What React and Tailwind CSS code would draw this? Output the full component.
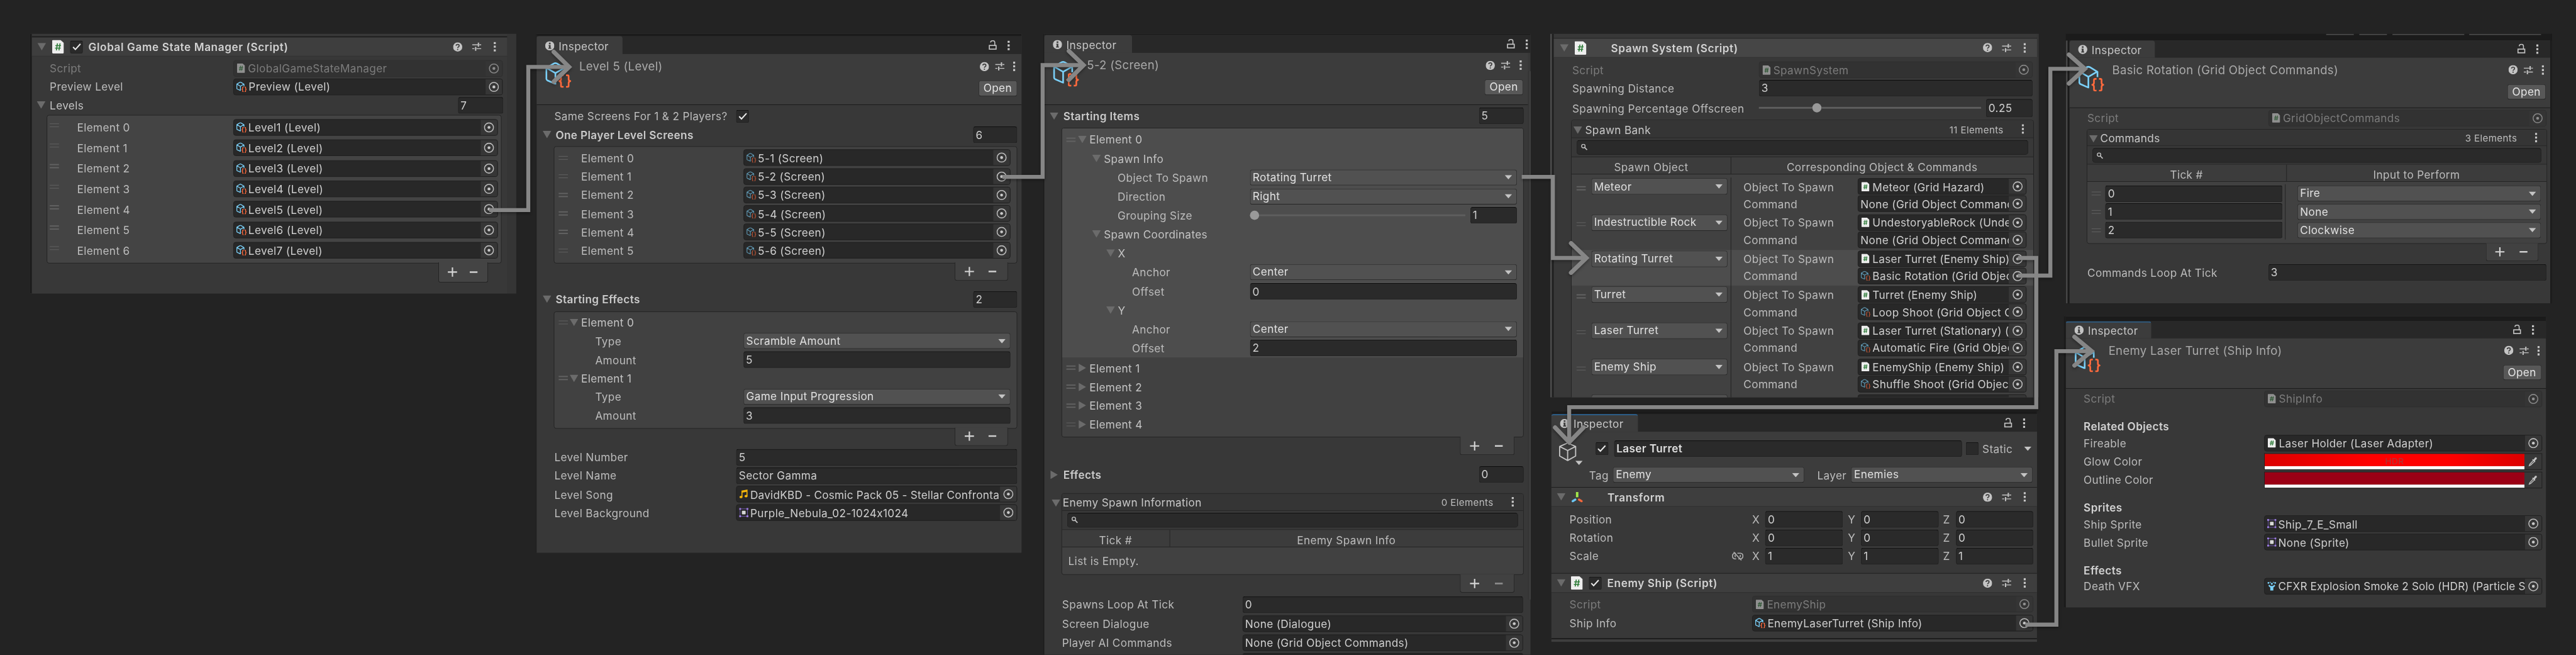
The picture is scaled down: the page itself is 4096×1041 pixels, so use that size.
import React from "react";

const cx = (...c) => c.filter(Boolean).join(" ");

/* ---------- icons ---------- */

const ScriptIcon = ({ className = "h-[16px] w-[13px]" }) => (
  <svg viewBox="0 0 19 22" className={cx("shrink-0", className)}>
    <path d="M1.5 0H13.5L19 5V20.500Q19 22 17.500 22H1.500Q0 22 0 20.500V1.500Q0 0 1.500 0Z" fill="#eeeeee" />
    <path d="M8.600 5.500L6.800 17M12.800 5.500L11 17M5.200 9.300H14.400M4.600 13.400H13.800" stroke="#2f7d3a" strokeWidth="1.700" fill="none" />
  </svg>
);

const AssetIcon = ({ className = "size-[16px]", sw = 2.7 }) => (
  <svg viewBox="0 0 43 42" className={cx("shrink-0", className)} fill="none" strokeLinejoin="round">
    <path
      d="M31.500 18.500V9.800L19 2.300Q16.600 1.200 14.300 2.300L2 9.500V27.500Q2.200 29 3.500 29.800L16 35.300H18M2 9.500L16.700 18L31.500 9.500M16.700 18V35"
      stroke="#7bd0f8"
      strokeWidth={sw}
    />
    <path
      d="M30 21.500H27.800Q25.800 21.500 25.800 23.500V28Q25.800 30.300 23 31Q25.800 31.700 25.800 34V38.500Q25.800 40.500 27.800 40.500H30M34 21.500H36.200Q38.200 21.500 38.200 23.500V28Q38.200 30.300 41 31Q38.200 31.700 38.200 34V38.500Q38.200 40.500 36.200 40.500H34"
      stroke="#ff6a3d"
      strokeWidth={sw}
    />
  </svg>
);

const SmallAsset = () => <AssetIcon className="size-[17px]" sw={3.4} />;
const DimAsset = () => <AssetIcon className="size-[16px] opacity-65" sw={3.2} />;
const DimScript = () => <ScriptIcon className="mr-[2px] ml-[1px] h-[16px] w-[13px] opacity-50" />;
const FieldScript = () => <ScriptIcon className="mr-[2px] ml-[1px] h-[16px] w-[13px]" />;

const SpriteIcon = () => (
  <svg viewBox="0 0 15 15" className="size-[15px] shrink-0">
    <rect x="1.500" y="1.500" width="12" height="12" fill="none" stroke="#6d55a5" strokeWidth="1" />
    <path d="M0 0h3v3h-3zM12 0h3v3h-3zM0 12h3v3h-3zM12 12h3v3h-3z" fill="#9a7be0" />
    <rect x="4.500" y="4.500" width="6" height="6" rx="1" fill="#d8d8d8" />
  </svg>
);

const MusicIcon = () => (
  <svg viewBox="0 0 15 15" className="size-[15px] shrink-0">
    <path d="M4.600 12V2.500L12.800 1V10.500" fill="none" stroke="#f5b50a" strokeWidth="1.600" />
    <path d="M4.600 2.300L12.800 .8V3.600L4.600 5.100Z" fill="#f5b50a" />
    <ellipse cx="3" cy="12.200" rx="2.500" ry="2" fill="#f5b50a" />
    <ellipse cx="11.200" cy="10.800" rx="2.500" ry="2" fill="#f5b50a" />
  </svg>
);

const ParticleIcon = () => (
  <svg viewBox="0 0 15 15" className="size-[15px] shrink-0" fill="#7bd0f8">
    <path d="M5 14.500V9.500L2.500 7.500Q1.500 5.500 3.500 5L5.500 7H9.500L11.500 5Q13.500 5.500 12.500 7.500L10 9.500V14.500Z" />
    <circle cx="2" cy="2" r="1.400" />
    <circle cx="7.500" cy="3.500" r="1.700" />
    <circle cx="13" cy="2" r="1.400" />
    <circle cx="5" cy="1" r=".9" />
    <circle cx="10.300" cy="1" r=".9" />
  </svg>
);

const Tri = ({ right, className }) =>
  right ? (
    <svg viewBox="0 0 12 14" className={cx("h-[14px] w-[12px] shrink-0", className)}>
      <path d="M0 0L12 7L0 14Z" fill="#6b6b6b" />
    </svg>
  ) : (
    <svg viewBox="0 0 14 12" className={cx("h-[12px] w-[14px] shrink-0", className)}>
      <path d="M0 0H14L7 12Z" fill="#6b6b6b" />
    </svg>
  );

const Caret = ({ className }) => (
  <svg viewBox="0 0 12 7" className={cx("h-[7px] w-[12px] shrink-0", className)}>
    <path d="M0 0H12L6 7Z" fill="#c4c4c4" />
  </svg>
);

const Dots = () => (
  <svg viewBox="0 0 4 16" className="h-[16px] w-[4px] shrink-0" fill="#c4c4c4">
    <path d="M.3 .3h3.400v3.400h-3.400zM.3 6.300h3.400v3.400h-3.400zM.3 12.300h3.400v3.400h-3.400z" />
  </svg>
);

const HelpIcon = () => (
  <svg viewBox="0 0 16 16" className="size-[15px] shrink-0">
    <circle cx="8" cy="8" r="8" fill="#c4c4c4" />
    <path d="M5.300 5.900Q5.500 3.600 8 3.600Q10.600 3.600 10.600 5.800Q10.600 7 9.400 7.800Q8 8.600 8 9.900" stroke="#3c3c3c" strokeWidth="1.800" fill="none" />
    <circle cx="8" cy="12.400" r="1.150" fill="#3c3c3c" />
  </svg>
);

const SlidersIcon = () => (
  <svg viewBox="0 0 16 16" className="h-[16px] w-[15px] shrink-0" stroke="#c4c4c4" fill="none">
    <path d="M0 4.800H11M12.500 4.800H16M0 11.500H4M7.500 11.500H16" strokeWidth="1.500" />
    <path d="M11 1V8M6.200 8.300V15.300" strokeWidth="2.200" />
  </svg>
);

const LockIcon = () => (
  <svg viewBox="0 0 14 17" className="h-[17px] w-[14px] shrink-0" stroke="#c4c4c4" fill="none">
    <rect x="1.500" y="9" width="11" height="6" strokeWidth="1.700" />
    <path d="M3.600 4.200V3.800Q3.800 1.300 6.800 1.300H7.600Q10.400 1.500 10.400 4.200V9" strokeWidth="1.600" />
  </svg>
);

const InfoIcon = () => (
  <svg viewBox="0 0 16 16" className="size-[15px] shrink-0">
    <circle cx="8" cy="8" r="8" fill="#c4c4c4" />
    <path d="M6.500 2.500h3v2.800h-3zM6 6.600h3.500v4.900h1v1.800h-5v-1.800h1v-3.200h-.5z" fill="#3c3c3c" />
  </svg>
);

const SearchIcon = () => (
  <svg viewBox="0 0 12 12" className="size-[11px] shrink-0" stroke="#c4c4c4" fill="none">
    <ellipse cx="4.500" cy="4.200" rx="3.100" ry="3.100" strokeWidth="1.500" />
    <path d="M6.800 6.600L11 11" strokeWidth="1.900" />
  </svg>
);

const Dropper = () => (
  <svg viewBox="0 0 16 17" className="h-[17px] w-[15px] shrink-0">
    <path d="M8.500 7L3 13L2 15.500L4.500 14.500L10.500 9" fill="none" stroke="#c4c4c4" strokeWidth="1.400" />
    <path d="M7 5.500L8.300 4.200L9.500 5L12 1.500Q14 .5 15 2Q15.500 3.200 14.500 4.300L11.800 7L12.700 8.500L11.400 9.800Z" fill="#c4c4c4" />
  </svg>
);

const CubeIcon = () => (
  <svg viewBox="0 0 31 31" className="size-[31px] shrink-0" fill="none" stroke="#c4c4c4" strokeWidth="1.900" strokeLinejoin="round">
    <path d="M15.500 1.200L28.500 7V22.500L15.500 29.800L2.500 22.500V7ZM2.500 7L15.500 13.500L28.500 7M15.500 13.500V29.500" />
  </svg>
);

const TransformIcon = () => (
  <svg viewBox="0 0 20 17" className="h-[17px] w-[20px] shrink-0" strokeLinecap="round" strokeWidth="3.600">
    <path d="M10 0V8.500" stroke="#a2e84a" strokeLinecap="butt" strokeWidth="4" />
    <path d="M7 12.500L2.800 15" stroke="#6cc7f5" />
    <path d="M13 12.500L17.200 15" stroke="#f2673c" />
  </svg>
);

const LinkIcon = () => (
  <svg viewBox="0 0 19 15" className="h-[15px] w-[19px] shrink-0" fill="none" stroke="#b0b0b0" strokeWidth="1.600">
    <path d="M6.500 2.800H4.800Q1 3.200 1 7.300Q1 11.500 5 11.900H7M12 2.800H14Q18 3.200 18 7.300Q18 11.500 14 11.900H10.500M5.500 5.500Q4.500 7.500 6 9M13.500 5.500Q14.500 7.500 13 9M9 2.800H12" />
    <path d="M3 .8L15.500 14.300" />
  </svg>
);

const Target = ({ dim }) => (
  <svg viewBox="0 0 16 16" className={cx("size-[17px] shrink-0", dim && "opacity-60")}>
    <circle cx="8" cy="8" r="6.900" fill="none" stroke="#bdbdbd" strokeWidth="1.500" />
    <circle cx="8" cy="8" r="2.200" fill="#c9c9c9" />
  </svg>
);

/* ---------- controls ---------- */

const Row = ({ className, children }) => <div className={cx("flex shrink-0 items-center", className)}>{children}</div>;

const Label = ({ className, children, dim }) => (
  <div className={cx("shrink-0 whitespace-nowrap", dim ? "text-[#7c7c7c]" : "text-[#bcbcbc]", className)}>
    <span className="relative top-[1px]">{children}</span>
  </div>
);

const Fold = ({ className, gap = "gap-[6px]", right, bold, children }) => (
  <div className={cx("flex shrink-0 items-center whitespace-nowrap text-[#c4c4c4]", gap, className)}>
    <Tri right={right} />
    <span className={cx("pt-[2px]", bold && "font-semibold text-[#cacaca]")}>{children}</span>
  </div>
);

const Input = ({ className, h = "h-[27px]", children, bold }) => (
  <div
    className={cx(
      "flex shrink-0 items-center overflow-hidden rounded-[4px] border-[1.500px] border-[#212121] border-t-[#0d0d0d] bg-[#2a2a2a] pl-[3.500px] pt-[1px] whitespace-nowrap text-[#cfcfcf]",
      h,
      bold && "font-semibold",
      className
    )}
  >
    {children}
  </div>
);

const Obj = ({ className, icon, children, dim, bw = "w-[27px]" }) => (
  <div
    className={cx(
      "flex h-[27px] shrink-0 items-stretch overflow-hidden rounded-[4px] border-[1.500px]",
      dim ? "border-[#2f2f2f] bg-[#323232] text-[#7c7c7c]" : "border-[#202020] bg-[#282828] text-[#cfcfcf]",
      className
    )}
  >
    <div className={cx("flex min-w-0 flex-1 items-center gap-[3px] overflow-hidden whitespace-nowrap", icon ? "pl-[4px]" : "pl-[3.500px]")}>
      {icon}
      <span className="pt-[2px]">{children}</span>
    </div>
    <div className={cx("flex shrink-0 items-center justify-center", bw, dim ? "bg-[#353535]" : "bg-[#363636]")}>
      <Target dim={dim} />
    </div>
  </div>
);

const Select = ({ className, children }) => (
  <div
    className={cx(
      "flex h-[26px] shrink-0 items-center justify-between rounded-[4px] border-[1.500px] border-[#303030] border-b-[#262626] bg-[#515151] pr-[7px] pl-[4px] whitespace-nowrap text-[#e0e0e0]",
      className
    )}
  >
    <span>{children}</span>
    <Caret />
  </div>
);

const Check = ({ on, className }) => (
  <div className={cx("flex size-[21px] shrink-0 items-center justify-center rounded-[3px] border-[1.500px] border-[#212121] border-t-[#0d0d0d] bg-[#2a2a2a]", className)}>
    {on && (
      <svg viewBox="0 0 14 13" className="h-[13px] w-[14px]" fill="none" stroke="#e8e8e8" strokeWidth="2.100">
        <path d="M1 6.500L4.800 10.500L13 1.500" />
      </svg>
    )}
  </div>
);

const Handle = ({ className }) => (
  <div className={cx("flex w-[15px] shrink-0 flex-col gap-[3.500px]", className)}>
    <div className="h-[1.500px] bg-[#626262]" />
    <div className="h-[1.500px] bg-[#626262]" />
  </div>
);

const ListBox = ({ className, bg = "bg-[#414141]", children }) => (
  <div className={cx("shrink-0 overflow-hidden rounded-[4px] border-[1.500px] border-[#242424]", bg, className)}>{children}</div>
);

const Footer = ({ className, minusDim, bg = "bg-[#414141]" }) => (
  <div className={cx("relative -mt-[1.500px] flex shrink-0 items-center rounded-b-[4px] border-[1.500px] border-t-0 border-[#242424]", bg, className)}>
    <svg viewBox="0 0 16 16" className="size-[16px] shrink-0" stroke="#d6d6d6" strokeWidth="2.200">
      <path d="M8 .5V15.500M.5 8H15.500" />
    </svg>
    <svg viewBox="0 0 13 4" className={cx("ml-auto h-[4px] w-[13px] shrink-0", minusDim && "opacity-50")}>
      <path d="M0 .7h13v2.600h-13z" fill="#d0d0d0" />
    </svg>
  </div>
);

const Tools = ({ wide, className }) => (
  <div className={cx("ml-auto flex shrink-0 items-center", className)}>
    <HelpIcon />
    <div className={wide ? "w-[15.500px]" : "w-[10px]"} />
    <SlidersIcon />
    <div className={wide ? "w-[20.500px]" : "w-[14.500px]"} />
    <Dots />
  </div>
);

const TabBar = ({ className, tab, pr = "pr-[19px]", blue }) => (
  <div className={cx("flex shrink-0 items-stretch bg-[#282828]", className)}>
    <div
      className={cx(
        "flex items-center gap-[7px] rounded-t-[4px] bg-[#3c3c3c] pl-[14px] text-[#c8c8c8]",
        tab,
        blue ? "border-t-[2.500px] border-[#2c5d87]" : "pt-[2px]"
      )}
    >
      <InfoIcon />
      <span className="pt-[2px]">Inspector</span>
    </div>
    <div className={cx("ml-auto flex items-center gap-[17px]", pr)}>
      <LockIcon />
      <Dots />
    </div>
  </div>
);

const AssetHeader = ({ className, title }) => (
  <div className={cx("flex shrink-0 border-b-[1.500px] border-[#1a1a1a] bg-[#3c3c3c] pl-[14px]", className)}>
    <AssetIcon className="mt-[13px] h-[42px] w-[43px]" />
    <div className="mt-[8px] ml-[12.500px] h-[26px] text-[19px] leading-[26px] tracking-[0.320px] whitespace-nowrap text-[#a9a9a9]">{title}</div>
    <div className="ml-auto flex flex-col items-end pt-[12px]">
      <Tools className="h-[16px] pr-[10px]" />
      <div className="mt-[15px] mr-[7.500px] flex h-[25.500px] w-[63px] items-center justify-center rounded-[4px] border-[1.500px] border-[#303030] border-b-[#242424] bg-[#585858] text-[#e4e4e4]">
        Open
      </div>
    </div>
  </div>
);

const CompHeader = ({ className, icon, check, title, tl }) => (
  <div className={cx("flex shrink-0 items-center border-b border-[#303030] pr-[18px]", className)}>
    <Tri />
    {icon}
    {check}
    <span className={cx("pt-[2px] font-semibold tracking-[0.600px] whitespace-nowrap text-[#d2d2d2]", tl)}>{title}</span>
    <Tools wide />
  </div>
);

const TableHead = ({ className, title, count, tri, hidden }) => (
  <div className={cx("flex shrink-0 items-center border-b-[1.500px] border-[#242424] bg-[#353535] pr-[15px]", className)}>
    {!hidden && <Tri className={cx("mt-[3px]", tri)} />}
    <span className="pt-[3px] text-[#c8c8c8]">{title}</span>
    <span className="mt-[3px] mr-[29px] ml-auto text-[15.500px] text-[#bdbdbd]">{count}</span>
    <Dots />
  </div>
);

const Search = ({ className }) => (
  <div className={cx("shrink-0 border-b-[1.500px] border-[#242424] bg-[#383838] px-[8px] pt-[3px]", className)}>
    <div className="flex h-[24px] items-center rounded-[5px] border-[1.500px] border-[#212121] border-t-[#0d0d0d] bg-[#2a2a2a] pl-[6px]">
      <SearchIcon />
    </div>
  </div>
);

const ColHead = ({ className, l, lw, r }) => (
  <div className={cx("flex shrink-0 border-b-[1.500px] border-[#242424] bg-[#3c3c3c] text-[#bcbcbc]", className)}>
    <div className={cx("flex shrink-0 items-center justify-center border-r-[1.500px] border-[#242424] pt-[7px]", lw)}>{l}</div>
    <div className="flex flex-1 items-center justify-center pt-[7px]">{r}</div>
  </div>
);

/* ---------- panels ---------- */

function GameStateManager() {
  return (
    <section className="mt-[55px] ml-[49px] flex h-[423px] w-[792px] shrink-0 overflow-hidden bg-[#353535]">
      <div className="w-[3px] shrink-0 bg-[#1b1b1b]" />
      <div className="flex w-[774px] shrink-0 flex-col bg-[#383838]">
        <div className="h-[6px] shrink-0 border-b-[2px] border-[#1c1c1c] bg-[#383838]" />
        <CompHeader
          className="h-[31px] bg-[#3e3e3e] pl-[9px]"
          icon={<ScriptIcon className="ml-[10px] h-[22px] w-[19px]" />}
          check={<Check on className="ml-[10px]" />}
          title="Global Game State Manager (Script)"
          tl="ml-[9px]"
        />
        <Row className="mt-[4px] h-[30px] pl-[29px]">
          <Label dim className="w-[299px]">Script</Label>
          <Obj dim className="w-[439px]" icon={<DimScript />}>GlobalGameStateManager</Obj>
        </Row>
        <Row className="h-[30.300px] pl-[29px]">
          <Label className="w-[299px]">Preview Level</Label>
          <Obj className="w-[439px]" icon={<SmallAsset />}>Preview (Level)</Obj>
        </Row>
        <Row className="h-[30.300px] pl-[8px]">
          <Fold gap="gap-[7px]" className="w-[685.500px]">Levels</Fold>
          <Input className="w-[74px]">7</Input>
        </Row>
        <ListBox bg="bg-[#444444]" className="ml-[24px] h-[242px] w-[741px] pt-[3px]">
          {[0, 1, 2, 3, 4, 5, 6].map((i) => (
            <Row key={i} className="h-[33.400px] pl-[4px]">
              <Handle className="-mt-[7px]" />
              <Label className="ml-[29.500px] w-[254px]">Element {i}</Label>
              <Obj className="w-[431px]" icon={<SmallAsset />}>Level{i + 1} (Level)</Obj>
            </Row>
          ))}
        </ListBox>
        <Footer bg="bg-[#444444]" className="ml-[662px] h-[33px] w-[81px] pr-[16px] pl-[14px]" />
      </div>
    </section>
  );
}

function LevelInspector() {
  return (
    <section className="mt-[55px] ml-[32px] flex h-[845px] w-[791px] shrink-0 flex-col overflow-hidden border-l-[1.600px] border-[#1b1b1b] bg-[#383838]">
      <div className="h-[4px] shrink-0 bg-[#1b1b1b]" />
      <TabBar className="h-[29px]" tab="w-[140px]" />
      <AssetHeader className="h-[83px]" title="Level 5 (Level)" />
      <Row className="mt-[3px] h-[30.200px] pl-[29px]">
        <Label className="w-[296px]">Same Screens For 1 &amp; 2 Players?</Label>
        <Check on />
      </Row>
      <Row className="h-[30.200px] pl-[9.500px]">
        <Fold bold gap="gap-[7.500px]" className="w-[701.500px]">One Player Level Screens</Fold>
        <Input className="w-[72px]">6</Input>
      </Row>
      <ListBox className="mt-[4px] ml-[27.500px] h-[190.500px] w-[755.500px] pt-[2.500px]">
        {[0, 1, 2, 3, 4, 5].map((i) => (
          <Row key={i} className="h-[30.200px] pl-[7.500px]">
            <Handle />
            <Label className="ml-[21.500px] w-[264px]">Element {i}</Label>
            <Obj className="w-[435.500px]" icon={<DimAsset />}>5-{i + 1} (Screen)</Obj>
          </Row>
        ))}
      </ListBox>
      <Footer className="ml-[681px] h-[29.500px] w-[87px] pr-[18px] pl-[15px]" />
      <Row className="mt-[15.500px] h-[30.200px] pl-[9.500px]">
        <Fold bold gap="gap-[7.500px]" className="w-[701.500px]">Starting Effects</Fold>
        <Input className="w-[72px]">2</Input>
      </Row>
      <ListBox className="mt-[4px] ml-[27.500px] h-[191px] w-[755.500px] pt-[2.500px]">
        {[
          ["Scramble Amount", 5],
          ["Game Input Progression", 3],
        ].map(([t, a], i) => (
          <div key={i}>
            <Row className="h-[30.200px] pl-[7.500px]">
              <Handle />
              <Fold className="ml-[2.500px]" gap="gap-[5px]">Element {i}</Fold>
            </Row>
            <Row className="h-[30.200px] pl-[67px]">
              <Label className="w-[241px]">Type</Label>
              <Select className="w-[435.500px]">{t}</Select>
            </Row>
            <Row className="h-[30.200px] pl-[67px]">
              <Label className="w-[241px]">Amount</Label>
              <Input className="w-[435.500px]">{a}</Input>
            </Row>
          </div>
        ))}
      </ListBox>
      <Footer className="ml-[681px] h-[29.500px] w-[87px] pr-[18px] pl-[15px]" />
      <Row className="mt-[3.500px] h-[30.200px] pl-[29px]">
        <Label className="w-[296px]">Level Number</Label>
        <Input className="w-[458px]">5</Input>
      </Row>
      <Row className="h-[30.200px] pl-[29px]">
        <Label className="w-[296px]">Level Name</Label>
        <Input className="w-[458px]">Sector Gamma</Input>
      </Row>
      <Row className="h-[30.200px] pl-[29px]">
        <Label className="w-[296px]">Level Song</Label>
        <Obj className="w-[458px]" icon={<MusicIcon />}>
          <span className="tracking-[0.250px]">DavidKBD - Cosmic Pack 05 - Stellar Confronta</span>
        </Obj>
      </Row>
      <Row className="h-[30.200px] pl-[29px]">
        <Label className="w-[296px]">Level Background</Label>
        <Obj className="w-[458px]" icon={<SpriteIcon />}>Purple_Nebula_02-1024x1024</Obj>
      </Row>
    </section>
  );
}

const AxisRows = ({ axis, value }) => (
  <>
    <Row className="h-[30.850px] pl-[72.500px]">
      <Fold gap="gap-[5px]">{axis}</Fold>
    </Row>
    <Row className="h-[30.850px] pl-[114.500px]">
      <Label className="w-[191.500px]">Anchor</Label>
      <Select className="w-[435px]">Center</Select>
    </Row>
    <Row className="h-[30.850px] pl-[114.500px]">
      <Label className="w-[191.500px]">Offset</Label>
      <Input className="w-[435px]">{value}</Input>
    </Row>
  </>
);

function ScreenInspector() {
  return (
    <section className="mt-[55px] ml-[35px] flex h-[1011px] w-[794px] shrink-0 flex-col overflow-hidden border-l-[2px] border-[#1b1b1b] bg-[#383838]">
      <div className="h-[2px] shrink-0 bg-[#1b1b1b]" />
      <TabBar className="h-[29px]" tab="w-[143px]" pr="pr-[4.500px]" />
      <div className="flex min-h-0 flex-1">
        <div className="flex w-[787.500px] shrink-0 flex-col">
          <AssetHeader className="h-[85px]" title="5-2 (Screen)" />
          <Row className="mt-[2.500px] h-[30.850px] pl-[9px]">
            <Fold bold gap="gap-[8px]" className="w-[698.500px]">Starting Items</Fold>
            <Input className="w-[73px]">5</Input>
          </Row>
          <ListBox className="mt-[4px] ml-[27.500px] h-[504px] w-[753px]">
            <div className="h-[373px] bg-[#4d4d4d] pt-[2.500px]">
              <Row className="h-[30.850px] pl-[7.500px]">
                <Handle />
                <Fold className="ml-[3.500px]" gap="gap-[5px]">Element 0</Fold>
              </Row>
              <Row className="h-[30.850px] pl-[49px]">
                <Fold gap="gap-[5.500px]">Spawn Info</Fold>
              </Row>
              <Row className="h-[30.850px] pl-[91px]">
                <Label className="w-[215px]">Object To Spawn</Label>
                <Select className="w-[435px]">Rotating Turret</Select>
              </Row>
              <Row className="h-[30.850px] pl-[91px]">
                <Label className="w-[215px]">Direction</Label>
                <Select className="w-[435px]">Right</Select>
              </Row>
              <Row className="h-[30.850px] pl-[91px]">
                <Label className="w-[215px]">Grouping Size</Label>
                <div className="size-[15px] shrink-0 rounded-full bg-[#999999]" />
                <div className="h-[3px] w-[336px] shrink-0 bg-[#5e5e5e]" />
                <Input className="ml-[8px] w-[76px]">1</Input>
              </Row>
              <Row className="h-[30.850px] pl-[49px]">
                <Fold gap="gap-[5.500px]">Spawn Coordinates</Fold>
              </Row>
              <AxisRows axis="X" value="0" />
              <AxisRows axis="Y" value="2" />
            </div>
            <div className="pt-[1px]">
              {[1, 2, 3, 4].map((i) => (
                <Row key={i} className="h-[30.800px] pl-[7.500px]">
                  <Handle />
                  <Fold right className="ml-[4.500px]" gap="gap-[6px]">Element {i}</Fold>
                </Row>
              ))}
            </div>
          </ListBox>
          <Footer className="ml-[676.500px] h-[30.500px] w-[89px] pr-[18px] pl-[15px]" />
          <Row className="mt-[16px] h-[30.850px] pl-[10px]">
            <Fold bold right gap="gap-[9px]" className="w-[697.500px]">Effects</Fold>
            <Input className="w-[73px]">0</Input>
          </Row>
          <div className="mt-[14.500px] flex h-[133.700px] shrink-0 items-start pl-[12px]">
            <Tri className="mt-[10px]" />
            <ListBox className="ml-[1.500px] flex h-[133.700px] w-[753px] flex-col">
              <TableHead hidden className="h-[28.300px] pl-[1.500px]" title="Enemy Spawn Information" count="0 Elements" />
              <Search className="h-[30.700px]" />
              <ColHead className="h-[28.100px]" lw="w-[176px]" l="Tick #" r="Enemy Spawn Info" />
              <div className="flex flex-1 items-center pl-[10.500px]">
                <Label>List is Empty.</Label>
              </div>
            </ListBox>
          </div>
          <Footer minusDim className="ml-[676.500px] h-[30.500px] w-[89px] pr-[18px] pl-[15px]" />
          <Row className="mt-[3.500px] h-[31px] pl-[29px]">
            <Label className="w-[293.500px]">Spawns Loop At Tick</Label>
            <Input className="w-[457px]">0</Input>
          </Row>
          <Row className="h-[31px] pl-[29px]">
            <Label className="w-[293.500px]">Screen Dialogue</Label>
            <Obj className="w-[457px]">None (Dialogue)</Obj>
          </Row>
          <Row className="h-[31px] pl-[29px]">
            <Label className="w-[293.500px]">Player AI Commands</Label>
            <Obj className="w-[457px]">None (Grid Object Commands)</Obj>
          </Row>
          <div className="mt-[1.500px] ml-[322.500px] h-[6px] w-[457px] shrink-0 rounded-t-[4px] bg-[#202020]" />
        </div>
        <div className="mt-[30px] h-[860px] flex-1 border-r-[1.500px] border-[#5a5a5a] bg-[#353535]" />
      </div>
    </section>
  );
}

const bank = [
  ["Meteor", "Meteor (Grid Hazard)", null],
  ["Indestructible Rock", "UndestoryableRock (Unde", null],
  ["Rotating Turret", "Laser Turret (Enemy Ship)", "Basic Rotation (Grid Objec"],
  ["Turret", "Turret (Enemy Ship)", "Loop Shoot (Grid Object C"],
  ["Laser Turret", "Laser Turret (Stationary) (", "Automatic Fire (Grid Objec"],
  ["Enemy Ship", "EnemyShip (Enemy Ship)", "Shuffle Shoot (Grid Object"],
  ["", "", null],
];

function SpawnSystem() {
  return (
    <section className="mt-[55px] flex h-[592px] w-[796px] shrink-0 overflow-hidden bg-[#353535]">
      <div className="w-[3px] shrink-0 bg-[#4a4a4a]" />
      <div className="w-[3px] shrink-0 bg-[#1f1f1f]" />
      <div className="flex w-[787px] shrink-0 flex-col bg-[#383838]">
        <div className="h-[7.700px] shrink-0 border-b-[1.700px] border-[#1c1c1c]" />
        <CompHeader
          className="h-[31.500px] bg-[#464646] pl-[9.500px]"
          icon={<ScriptIcon className="ml-[10.500px] h-[22px] w-[19px]" />}
          title="Spawn System (Script)"
          tl="ml-[40px]"
        />
        <Row className="mt-[4.200px] h-[30.300px] pl-[30px]">
          <Label dim className="w-[303.500px]">Script</Label>
          <Obj dim className="w-[446.500px]" icon={<DimScript />}>SpawnSystem</Obj>
        </Row>
        <Row className="h-[30.300px] pl-[30px]">
          <Label className="w-[303.500px]">Spawning Distance</Label>
          <Input className="w-[446.500px]">3</Input>
        </Row>
        <Row className="h-[34px] pl-[30px]">
          <Label className="w-[303.500px]">Spawning Percentage Offscreen</Label>
          <div className="h-[3px] w-[87px] shrink-0 bg-[#5e5e5e]" />
          <div className="size-[15px] shrink-0 rounded-full bg-[#999999]" />
          <div className="h-[3px] w-[260px] shrink-0 bg-[#5e5e5e]" />
          <Input h="h-[30px]" className="ml-[8px] w-[76.500px]">0.25</Input>
        </Row>
        <ListBox className="mt-[2.300px] ml-[28px] flex h-[500px] w-[753.500px] flex-col">
          <TableHead className="h-[28.500px] pl-[3px]" tri="mr-[5px]" title="Spawn Bank" count="11 Elements" />
          <Search className="h-[31px]" />
          <ColHead className="h-[28.500px]" lw="w-[260px]" l="Spawn Object" r="Corresponding Object & Commands" />
          <div className="h-[5px] shrink-0" />
          {bank.map(([name, obj, cmd], i) => (
            <div key={i} className={cx("flex h-[58.670px] shrink-0", i === 2 && "bg-[#4d4d4d]")}>
              <div className="flex w-[260px] shrink-0 items-start border-r-[1.500px] border-[#242424] pt-[1px] pl-[7.500px]">
                <Handle className={cx("mt-[13px]", i === 2 && "opacity-0")} />
                <Select className="ml-[9px] h-[27px] w-[222.500px]">{name}</Select>
              </div>
              <div className="flex flex-col gap-[1px] pt-[1px] pl-[20px]">
                <Row className="h-[27px]">
                  <Label className="w-[186px]">{obj && "Object To Spawn"}</Label>
                  <Obj className="w-[275px]" bw="w-[28px]" icon={obj && <FieldScript />}>
                    <span className="tracking-[0.300px]">{obj}</span>
                  </Obj>
                </Row>
                <Row className="h-[27px]">
                  <Label className="w-[186px]">Command</Label>
                  <Obj className="w-[275px]" bw="w-[28px]" icon={cmd && <DimAsset />}>
                    {cmd || "None (Grid Object Command"}
                  </Obj>
                </Row>
              </div>
            </div>
          ))}
        </ListBox>
      </div>
    </section>
  );
}

const Vec = ({ label, v, link }) => (
  <Row className="h-[30.200px] pl-[29.500px] text-[#bcbcbc]">
    <Label className="w-[264px]">{label}</Label>
    <div className="w-[33.500px] shrink-0">{link && <LinkIcon />}</div>
    <Label className="w-[21px]">X</Label>
    <Input className="w-[126.500px]">{v}</Input>
    <Label className="ml-[8.500px] w-[21px]">Y</Label>
    <Input className="w-[126.500px]">{v}</Input>
    <Label className="ml-[7.500px] w-[20.500px]">Z</Label>
    <Input className="w-[126.500px]">{v}</Input>
  </Row>
);

function LaserTurretInspector() {
  return (
    <section className="mt-[23px] ml-[2px] flex h-[375px] w-[791px] shrink-0 flex-col overflow-hidden bg-[#383838]">
      <div className="h-[4px] shrink-0 bg-[#1b1b1b]" />
      <TabBar blue className="h-[29px]" tab="w-[140.500px]" />
      <div className="flex h-[91px] shrink-0 flex-col border-b-[1.500px] border-[#1a1a1a] bg-[#3c3c3c]">
        <div className="flex pl-[11px]">
          <div className="flex w-[60.500px] shrink-0 pt-[17px]">
            <CubeIcon />
            <Caret className="mt-[30px] -ml-[3px]" />
          </div>
          <Row className="mt-[12.500px] h-[30px]">
            <Check on />
            <Input bold className="ml-[9px] w-[567.500px] text-[#dedede]">Laser Turret</Input>
            <Check className="ml-[5.500px]" />
            <Label className="ml-[6.500px] w-[68px]">Static</Label>
            <Caret />
          </Row>
        </div>
        <Row className="mt-[1px] h-[30px] pl-[61.500px]">
          <Label className="w-[38.500px] pt-[2px]">Tag</Label>
          <Select className="w-[312px]">Enemy</Select>
          <Label className="ml-[21px] w-[55px] pt-[2px]">Layer</Label>
          <Select className="w-[295.500px]">Enemies</Select>
        </Row>
      </div>
      <CompHeader className="h-[31px] bg-[#3e3e3e] pl-[9px]" icon={<span className="ml-[9px]"><TransformIcon /></span>} title="Transform" tl="ml-[39.500px]" />
      <div className="h-[5px] shrink-0" />
      <Vec label="Position" v="0" />
      <Vec label="Rotation" v="0" />
      <Vec label="Scale" v="1" link />
      <div className="mt-[12px] h-[1.500px] shrink-0 bg-[#1a1a1a]" />
      <CompHeader
        className="h-[31.300px] bg-[#3e3e3e] pl-[9px]"
        icon={<ScriptIcon className="ml-[9px] h-[22px] w-[19px]" />}
        check={<Check on className="ml-[9.500px]" />}
        title="Enemy Ship (Script)"
        tl="ml-[9.500px]"
      />
      <Row className="mt-[3.400px] h-[30.200px] pl-[29.500px]">
        <Label dim className="w-[297.500px]">Script</Label>
        <Obj dim className="w-[457.500px]" icon={<DimScript />}>EnemyShip</Obj>
      </Row>
      <Row className="h-[30.200px] pl-[29.500px]">
        <Label className="w-[297.500px]">Ship Info</Label>
        <Obj className="w-[457.500px]" icon={<SmallAsset />}>EnemyLaserTurret (Ship Info)</Obj>
      </Row>
      <div className="mt-[10px] h-[1.500px] shrink-0 bg-[#1a1a1a]" />
      <div className="flex-1 bg-[#3e3e3e]" />
    </section>
  );
}

function CommandsInspector() {
  return (
    <section className="mt-[55px] ml-[3px] flex h-[439px] w-[792px] shrink-0 flex-col overflow-hidden bg-[#1d1d1d]">
      <div className="flex h-[10.700px] shrink-0 gap-[8.500px] bg-[#1b1b1b] pl-[424px]">
        <div className="h-[2px] w-[45px] bg-[#4a4a4a]" />
        <div className="h-[2px] w-[45.500px] bg-[#4a4a4a]" />
        <div className="h-[2px] w-[117px] bg-[#4a4a4a]" />
        <div className="h-[2px] w-[116.500px] bg-[#4a4a4a]" />
      </div>
      <div className="flex min-h-0 flex-1">
        <div className="w-[2.500px] shrink-0 bg-[#454545]" />
        <div className="w-[3.500px] shrink-0 bg-[#1b1b1b]" />
        <div className="flex w-[783.300px] shrink-0 flex-col bg-[#383838]">
          <TabBar className="h-[28.300px]" tab="w-[139px]" />
          <AssetHeader className="h-[82.200px]" title="Basic Rotation (Grid Object Commands)" />
          <Row className="mt-[1.300px] h-[30px] pl-[29px]">
            <Label dim className="w-[294.500px]">Script</Label>
            <Obj dim className="w-[453.500px]" icon={<DimScript />}>GridObjectCommands</Obj>
          </Row>
          <ListBox className="mt-[2.500px] ml-[27.500px] flex h-[187.300px] w-[750.500px] flex-col">
            <TableHead className="h-[27.200px] pl-[3px]" tri="mr-[4.500px]" title="Commands" count="3 Elements" />
            <Search className="h-[30px]" />
            <ColHead className="h-[27.500px]" lw="w-[325px]" l="Tick #" r="Input to Perform" />
            <div className="h-[4.500px] shrink-0" />
            {["Fire", "None", "Clockwise"].map((t, i) => (
              <Row key={i} className="h-[29.900px] pl-[7px]">
                <Handle />
                <Input className="ml-[7.500px] w-[289px]">{i}</Input>
                <div className="ml-[3.500px] h-[30px] w-[1.500px] shrink-0 bg-[#242424]" />
                <Select className="ml-[18.500px] w-[397px]">{t}</Select>
              </Row>
            ))}
          </ListBox>
          <Footer className="ml-[678px] h-[29.500px] w-[85.500px] pr-[17px] pl-[14px]" />
          <Row className="mt-[3.700px] h-[30px] pl-[29px]">
            <Label className="w-[294.500px]">Commands Loop At Tick</Label>
            <Input className="w-[453.500px]">3</Input>
          </Row>
        </div>
      </div>
    </section>
  );
}

const ColorField = ({ className, children }) => (
  <div className="flex h-[27px] w-[452.500px] shrink-0 border-[1.300px] border-[#202020] bg-[#383838]">
    <div className="flex w-[423px] shrink-0 flex-col">
      <div className={cx("flex h-[20px] items-center justify-center text-[14px] text-[#a83a3a]", className)}>
        <span className="pt-[4px]">{children}</span>
      </div>
      <div className="h-[5px] bg-white" />
    </div>
    <div className="flex flex-1 items-center justify-center">
      <Dropper />
    </div>
  </div>
);

const Section = ({ children }) => <div className="flex h-[41.800px] shrink-0 items-center pt-[20px] pl-[29px] font-semibold text-[#d2d2d2]">{children}</div>;

function ShipInfoInspector() {
  return (
    <section className="mt-[21px] flex h-[474px] w-[785px] shrink-0 flex-col overflow-hidden border-l-[3px] border-[#1b1b1b] bg-[#383838]">
      <div className="h-[7.700px] shrink-0 bg-[#1b1b1b]" />
      <TabBar blue className="h-[28.300px]" tab="w-[139px]" />
      <AssetHeader className="h-[82.500px]" title="Enemy Laser Turret (Ship Info)" />
      <Row className="mt-[.7px] h-[30.200px] pl-[29px]">
        <Label dim className="w-[294px]">Script</Label>
        <Obj dim className="w-[452.500px]" icon={<DimScript />}>ShipInfo</Obj>
      </Row>
      <Section>Related Objects</Section>
      <Row className="h-[30px] pl-[29px]">
        <Label className="w-[294px]">Fireable</Label>
        <Obj className="w-[452.500px]" icon={<FieldScript />}>Laser Holder (Laser Adapter)</Obj>
      </Row>
      <Row className="h-[30px] pl-[29px]">
        <Label className="w-[294px]">Glow Color</Label>
        <ColorField className="bg-[linear-gradient(90deg,#dc0000,#ff0000_40%,#ff0000_70%,#dc0000)]">HDR</ColorField>
      </Row>
      <Row className="h-[30px] pl-[29px]">
        <Label className="w-[294px]">Outline Color</Label>
        <ColorField className="bg-[#9b0015]" />
      </Row>
      <Section>Sprites</Section>
      <Row className="h-[30px] pl-[29px]">
        <Label className="w-[294px]">Ship Sprite</Label>
        <Obj className="w-[452.500px]" icon={<SpriteIcon />}>Ship_7_E_Small</Obj>
      </Row>
      <Row className="h-[29.700px] pl-[29px]">
        <Label className="w-[294px]">Bullet Sprite</Label>
        <Obj className="w-[452.500px]" icon={<SpriteIcon />}>None (Sprite)</Obj>
      </Row>
      <Section>Effects</Section>
      <Row className="h-[30px] pl-[29px]">
        <Label className="w-[294px]">Death VFX</Label>
        <Obj className="w-[452.500px]" icon={<ParticleIcon />}>
          <span className="tracking-[0.150px]">CFXR Explosion Smoke 2 Solo (HDR) (Particle S</span>
        </Obj>
      </Row>
    </section>
  );
}

const Arrows = () => (
  <svg viewBox="0 0 4196 1066" className="pointer-events-none absolute inset-0 h-[1066px] w-[4196px] drop-shadow-[0_2px_2px_rgba(0,0,0,0.35)]" fill="none" stroke="#868686" strokeWidth="6.500">
    <path d="M797 342H860.500V109H926M1633 288H1698.300V106H1764M2478.700 288H2529.500V420H2583M3287 420H3316.800V663H2556V718M3287 448.700H3339.800V112H3395M3299 1017H3349.600V571.700H3406" />
    <path
      d="M902 84.500L927 109L902 133M1741 83L1765 106L1741 130M2559 396L2584 420L2559 444M2533 696L2556 720L2579.500 696M3370 89L3396 112L3370 136M3379 548.500L3407 571.700L3379 595"
      strokeLinecap="round"
      strokeWidth="7"
    />
  </svg>
);

export default function App() {
  return (
    <div className="h-[1041px] w-[4096px] overflow-hidden bg-[#232323]">
      <div className="relative flex h-[1066px] w-[4196px] origin-top-left scale-[0.97617] items-start bg-[#232323] font-['Inter','Liberation_Sans',sans-serif] text-[17.600px] leading-[22px] tracking-[0.370px]">
        <GameStateManager />
        <LevelInspector />
        <ScreenInspector />
        <div className="ml-[32px] flex w-[797px] shrink-0 flex-col">
          <SpawnSystem />
          <LaserTurretInspector />
        </div>
        <div className="ml-[40px] flex w-[795px] shrink-0 flex-col">
          <CommandsInspector />
          <ShipInfoInspector />
        </div>
        <Arrows />
      </div>
    </div>
  );
}
